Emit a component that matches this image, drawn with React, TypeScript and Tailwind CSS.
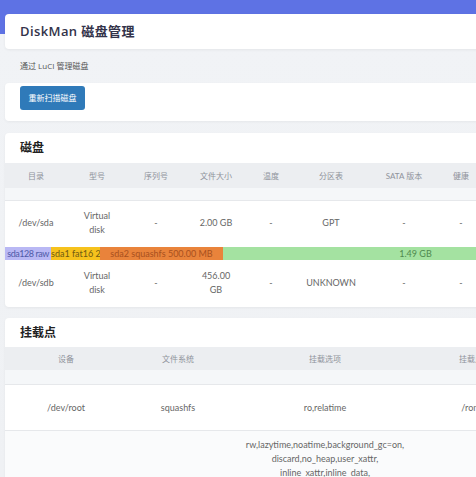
import React from "react";

const font = { fontFamily: '"Open Sans", "Noto Sans CJK SC", sans-serif' };
const tableFont = { fontFamily: 'Lato, "Noto Sans CJK SC", sans-serif' };

const diskCols = ["w-[62px]", "w-[60px]", "w-[58px]", "w-[62px]", "w-[48px]", "w-[72px]", "w-[74px]", "w-[40px]", "w-[60px]", "w-[60px]"];
const diskHead = ["目录", "型号", "序列号", "文件大小", "温度", "分区表", "SATA 版本", "健康", "状态", "操作"];

const mountCols = ["w-[122px]", "w-[102px]", "w-[192px]", "w-[100px]", "w-[80px]"];
const mountHead = ["设备", "文件系统", "挂载选项", "挂载点", ""];

function Cell({ w, children }: { w: string; children?: React.ReactNode }) {
  return <div className={`${w} shrink-0 flex items-center justify-center text-center`}>{children}</div>;
}

export default function App() {
  const sda = ["/dev/sda", <span>Virtual<br />disk</span>, "-", "2.00 GB", "-", "GPT", "-", "-", "", ""];
  const sdb = ["/dev/sdb", <span>Virtual<br />disk</span>, "-", <span>456.00<br />GB</span>, "-", "UNKNOWN", "-", "-", "", ""];
  return (
    <div
      className="w-[476px] h-[477px] overflow-hidden bg-[linear-gradient(#5e72e4_0px,#5e72e4_34px,#f1f3f6_34px,#eff1f4_100%)]"
      style={font}
    >
      <div className="w-[603px] ml-[5px] pt-[14px] flex flex-col">
        {/* title card */}
        <div className="shrink-0 h-[35px] bg-white rounded-[4px] shadow-[0_1px_3px_rgba(0,0,0,0.06)] flex items-center px-[15px]">
          <span className="text-[13px] font-semibold text-[#33334a] tracking-[0.4px]">DiskMan 磁盘管理</span>
        </div>
        {/* description */}
        <div className="shrink-0 h-[34px] flex items-center px-[15px] text-[8px] text-[#555]">通过 LuCI 管理磁盘</div>
        {/* button card */}
        <div className="shrink-0 h-[38px] bg-white rounded-[4px] px-[15px] pt-[3px] shadow-[0_1px_3px_rgba(0,0,0,0.05)]">
          <button className="w-[65px] h-[24px] rounded-[3px] bg-[#2f7ab9] text-white text-[8px] flex items-center justify-center">
            重新扫描磁盘
          </button>
        </div>

        {/* disks card */}
        <div className="shrink-0 mt-[12px] h-[174px] bg-white rounded-[4px] shadow-[0_1px_3px_rgba(0,0,0,0.05)] flex flex-col" style={tableFont}>
          <div className="shrink-0 h-[30px] flex items-center px-[15px] text-[12px] font-bold text-[#222]" style={font}>磁盘</div>
          <div className="shrink-0 h-[25px] bg-[#eceef1] flex text-[8px] text-[#8f939b]">
            {diskHead.map((h, i) => (
              <Cell key={i} w={diskCols[i]}>{h}</Cell>
            ))}
          </div>
          <div className="shrink-0 h-[13px] bg-[#f5f7f9] border-b border-[#e6e8eb]" />
          <div className="shrink-0 h-[44px] flex text-[9px] leading-[14px] text-[#666]">
            {sda.map((c, i) => (
              <Cell key={i} w={diskCols[i]}>{c}</Cell>
            ))}
          </div>
          <div className="shrink-0 h-[16px] pt-[2px] pb-[1px]">
            <div className="h-[13px] flex text-[9px] leading-[13px] whitespace-nowrap">
              <div className="w-[46px] shrink-0 overflow-hidden text-center bg-[#b9b8f4] text-[#4f5aa8] tracking-[-0.45px]">sda128 raw</div>
              <div className="w-[49px] shrink-0 overflow-hidden text-center bg-[#f6c21c] text-[#6e5a12]">sda1 fat16 20.00 MB</div>
              <div className="w-[123px] shrink-0 overflow-hidden text-center bg-[#e9833b] text-[#a8501e]">sda2 squashfs 500.00 MB</div>
              <div className="flex-1 overflow-hidden text-center bg-[#a4e2a1] text-[#4f8a4f]">1.49 GB</div>
            </div>
          </div>
          <div className="shrink-0 h-[44px] flex text-[9px] leading-[14px] text-[#666]">
            {sdb.map((c, i) => (
              <Cell key={i} w={diskCols[i]}>{c}</Cell>
            ))}
          </div>
        </div>

        {/* mount card */}
        <div className="shrink-0 mt-[11px] bg-white rounded-[4px] shadow-[0_1px_3px_rgba(0,0,0,0.05)] flex flex-col" style={tableFont}>
          <div className="shrink-0 h-[29px] flex items-center px-[15px] text-[12px] font-bold text-[#222]" style={font}>挂载点</div>
          <div className="shrink-0 h-[23px] bg-[#eceef1] flex text-[8px] text-[#8f939b]">
            {mountHead.map((h, i) => (
              <Cell key={i} w={mountCols[i]}>{h}</Cell>
            ))}
          </div>
          <div className="shrink-0 h-[15px] bg-[#f5f7f9] border-b border-[#e6e8eb]" />
          <div className="shrink-0 h-[46px] flex text-[9px] leading-[14px] text-[#666] border-b border-[#e6e8eb]">
            <Cell w={mountCols[0]}>/dev/root</Cell>
            <Cell w={mountCols[1]}>squashfs</Cell>
            <Cell w={mountCols[2]}>ro,relatime</Cell>
            <Cell w={mountCols[3]}>/rom</Cell>
          </div>
          <div className="shrink-0 flex text-[9px] leading-[14px] text-[#666] bg-[#fafbfc] pt-[7px] pb-[8px]">
            <Cell w={mountCols[0]}>/dev/loop0</Cell>
            <Cell w={mountCols[1]}>f2fs</Cell>
            <Cell w={mountCols[2]}>
              <span>
                rw,lazytime,noatime,background_gc=on,<br />
                discard,no_heap,user_xattr,<br />
                inline_xattr,inline_data,<br />
                inline_dentry,flush_merge,<br />
                extent_cache,mode=adaptive,<br />
                active_logs=6,<br />
                alloc_mode=default,<br />
                fsync_mode=posix
              </span>
            </Cell>
            <Cell w={mountCols[3]}>/overlay</Cell>
          </div>
        </div>
      </div>
    </div>
  );
}
